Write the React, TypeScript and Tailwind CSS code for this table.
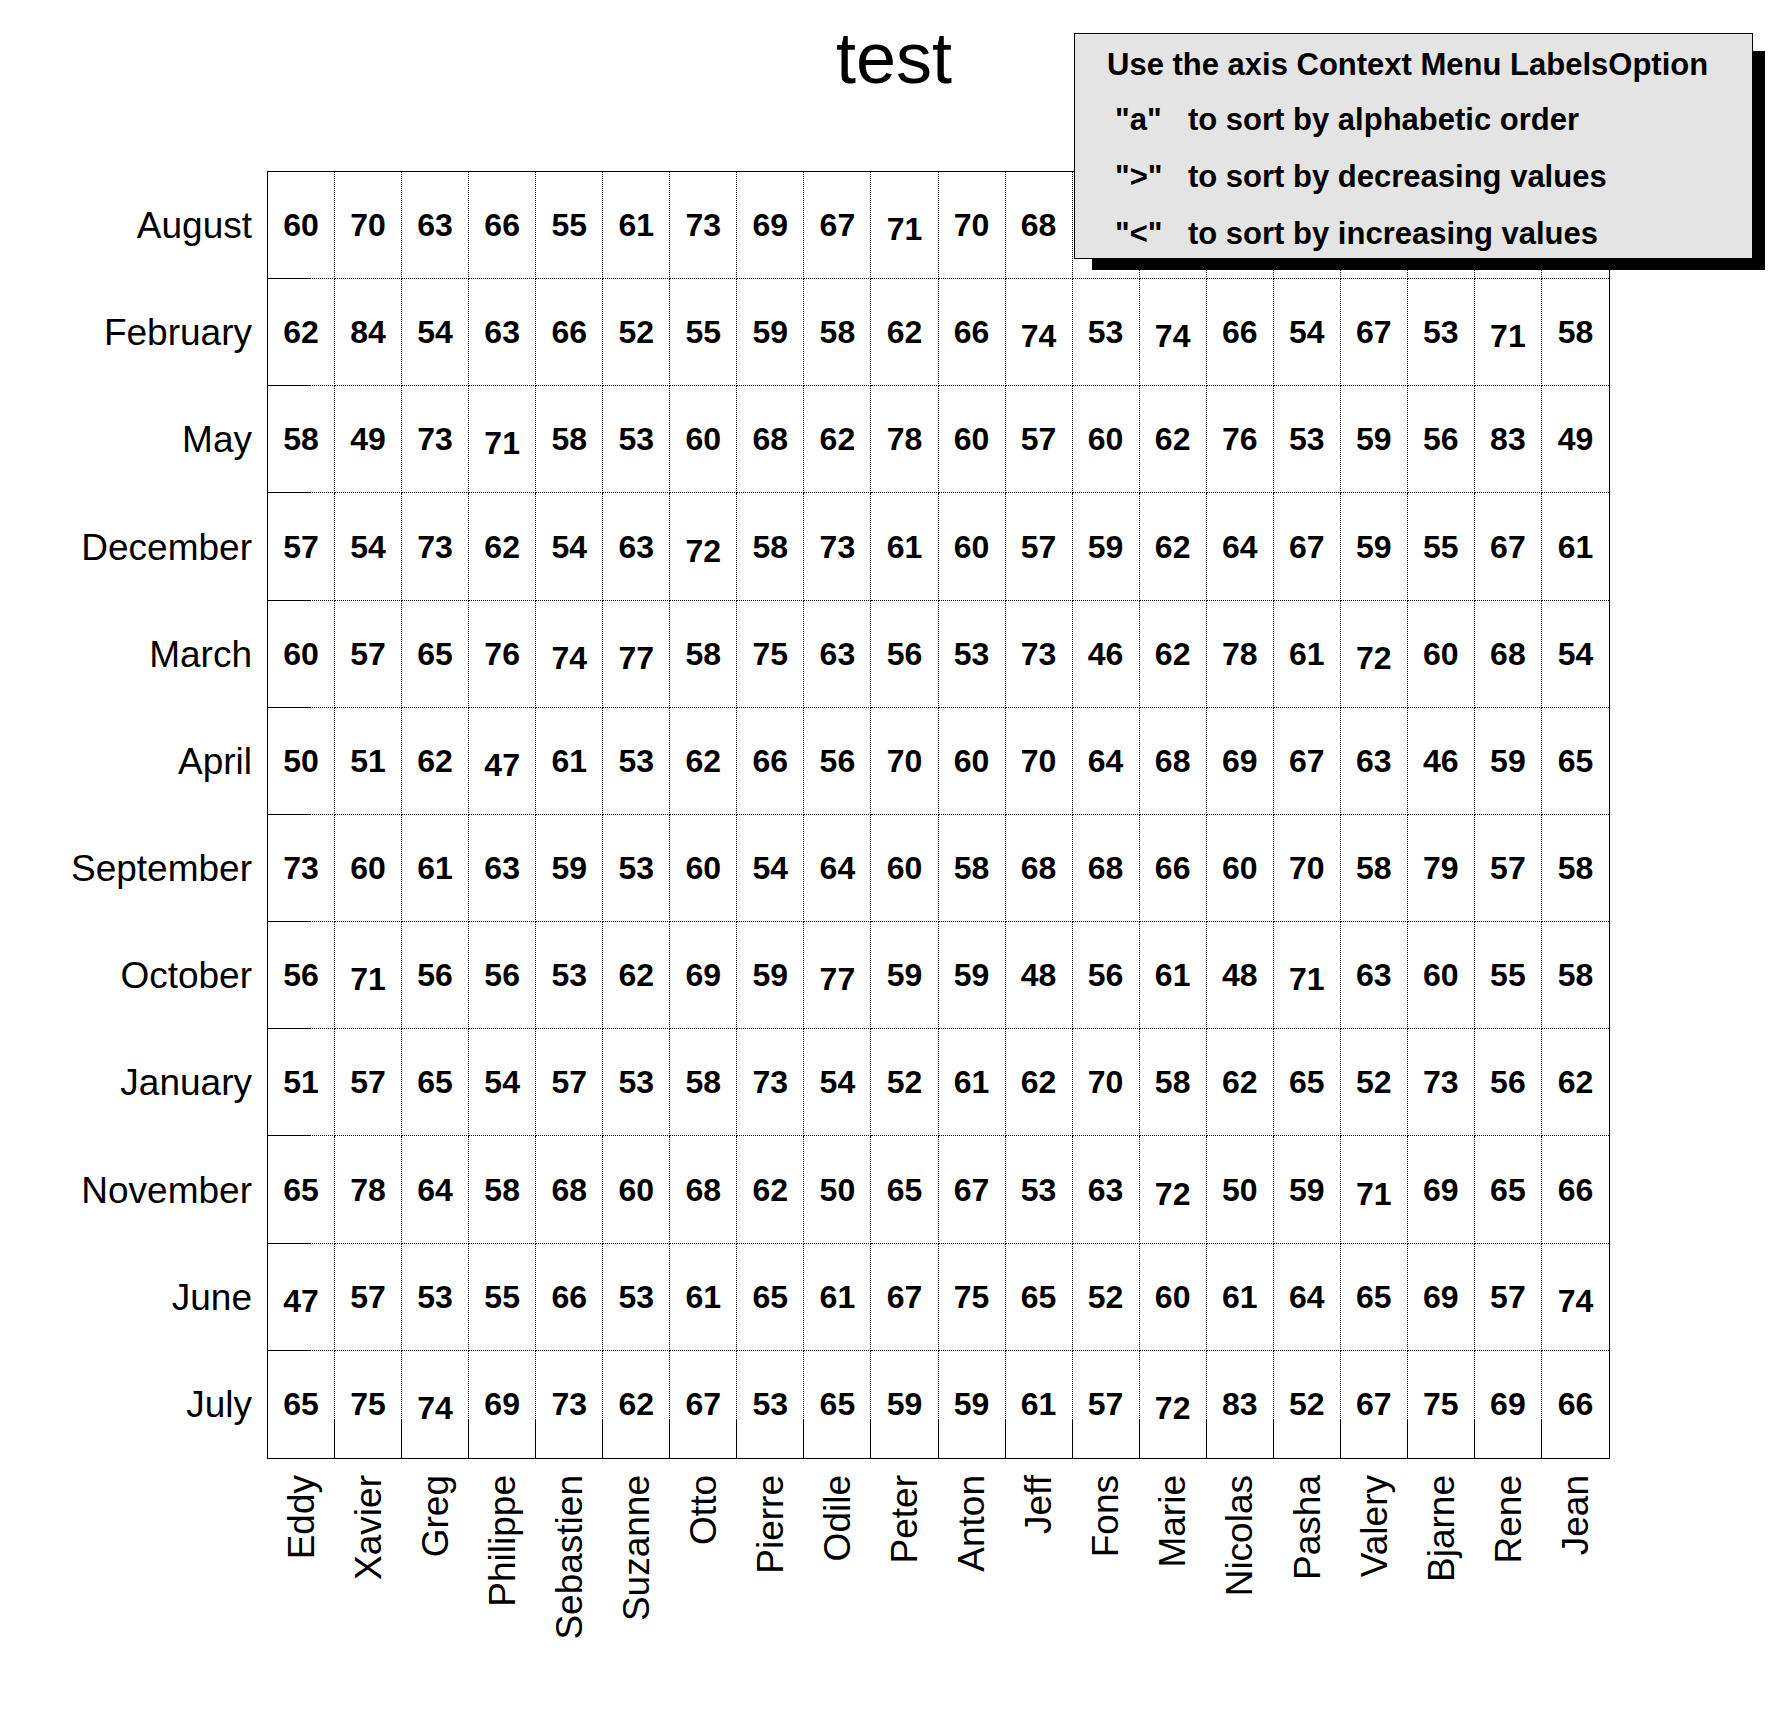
import React from 'react'

const names = [
  'Eddy', 'Xavier', 'Greg', 'Philippe', 'Sebastien', 'Suzanne', 'Otto', 'Pierre', 'Odile', 'Peter',
  'Anton', 'Jeff', 'Fons', 'Marie', 'Nicolas', 'Pasha', 'Valery', 'Bjarne', 'Rene', 'Jean'
]

// null = cell hidden under the legend pave
const months: [string, (number | null)[]][] = [
  ['August', [60, 70, 63, 66, 55, 61, 73, 69, 67, 71, 70, 68, null, null, null, null, null, null, null, null]],
  ['February', [62, 84, 54, 63, 66, 52, 55, 59, 58, 62, 66, 74, 53, 74, 66, 54, 67, 53, 71, 58]],
  ['May', [58, 49, 73, 71, 58, 53, 60, 68, 62, 78, 60, 57, 60, 62, 76, 53, 59, 56, 83, 49]],
  ['December', [57, 54, 73, 62, 54, 63, 72, 58, 73, 61, 60, 57, 59, 62, 64, 67, 59, 55, 67, 61]],
  ['March', [60, 57, 65, 76, 74, 77, 58, 75, 63, 56, 53, 73, 46, 62, 78, 61, 72, 60, 68, 54]],
  ['April', [50, 51, 62, 47, 61, 53, 62, 66, 56, 70, 60, 70, 64, 68, 69, 67, 63, 46, 59, 65]],
  ['September', [73, 60, 61, 63, 59, 53, 60, 54, 64, 60, 58, 68, 68, 66, 60, 70, 58, 79, 57, 58]],
  ['October', [56, 71, 56, 56, 53, 62, 69, 59, 77, 59, 59, 48, 56, 61, 48, 71, 63, 60, 55, 58]],
  ['January', [51, 57, 65, 54, 57, 53, 58, 73, 54, 52, 61, 62, 70, 58, 62, 65, 52, 73, 56, 62]],
  ['November', [65, 78, 64, 58, 68, 60, 68, 62, 50, 65, 67, 53, 63, 72, 50, 59, 71, 69, 65, 66]],
  ['June', [47, 57, 53, 55, 66, 53, 61, 65, 61, 67, 75, 65, 52, 60, 61, 64, 65, 69, 57, 74]],
  ['July', [65, 75, 74, 69, 73, 62, 67, 53, 65, 59, 59, 61, 57, 72, 83, 52, 67, 75, 69, 66]],
]

// numbers drawn only with flat digits sit a little lower in the original plot
const sitsLow = (v: number) => /^[1247]+$/.test(String(v))

const hints: [string, string][] = [
  ['"a"', 'to sort by alphabetic order'],
  ['">"', 'to sort by decreasing values'],
  ['"<"', 'to sort by increasing values'],
]

export default function App() {
  return (
    <div className="relative w-[1788px] h-[1716px] bg-white text-black overflow-hidden font-['Liberation_Sans',Arial,sans-serif]">
      {/* Title */}
      <div className="h-[171px] pt-[22px] text-center text-[72px] leading-none">test</div>

      {/* Plot */}
      <div className="flex">
        <div className="w-[267px] h-[1288px] py-px grid grid-rows-12">
          {months.map(([m]) => (
            <div key={m} className="flex items-center justify-end pr-[15px] text-[37px] leading-none whitespace-nowrap">
              {m}
            </div>
          ))}
        </div>

        <div className="w-[1343px] h-[1288px] border border-black grid grid-cols-20 grid-rows-12">
          {months.map(([m, values], r) =>
            values.map((v, c) => (
              <div
                key={m + c}
                className={`relative flex items-center justify-center border-dotted border-black ${c < 19 ? 'border-r' : ''} ${r < 11 ? 'border-b' : ''}`}
              >
                {v !== null && (
                  <span className={`text-[32px] font-bold leading-none ${sitsLow(v) ? 'translate-y-[4px]' : ''}`}>{v}</span>
                )}
                {c === 0 && r < 11 && <span className="absolute left-0 -bottom-px h-px w-[42px] bg-black" />}
                {r === 11 && c < 19 && <span className="absolute bottom-0 -right-px w-px h-[39px] bg-black" />}
              </div>
            ))
          )}
        </div>
      </div>

      {/* Column labels */}
      <div className="pl-[268px]">
        <div className="w-[1341px] grid grid-cols-20 pt-[16px]">
          {names.map((n) => (
            <div key={n} className="flex justify-center items-start">
              <span className="[writing-mode:vertical-rl] rotate-180 text-[37px] leading-normal whitespace-nowrap">{n}</span>
            </div>
          ))}
        </div>
      </div>

      {/* Legend pave */}
      <div className="absolute left-[1092px] top-[51px] w-[673px] h-[219px] bg-black" />
      <div className="absolute left-[1074px] top-[33px] w-[679px] h-[226px] border border-black bg-[#e4e4e4] pt-[5px] font-bold text-[31px]">
        <div className="h-[52px] leading-[52px] pl-[32px] whitespace-nowrap">Use the axis Context Menu LabelsOption</div>
        {hints.map(([k, t]) => (
          <div key={k} className="h-[57px] leading-[57px] pl-[40px] flex whitespace-nowrap">
            <span className="w-[73px] shrink-0">{k}</span>
            <span>{t}</span>
          </div>
        ))}
      </div>
    </div>
  )
}
